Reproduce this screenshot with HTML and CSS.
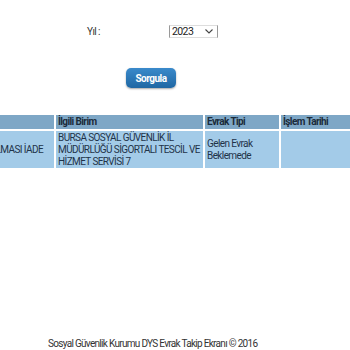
FILE: index.html
```html
<!DOCTYPE html>
<html>
<head>
<meta charset="utf-8">
<link rel="stylesheet" href="styles.css">
</head>
<body>
<div class="page">
  <div class="form-row">
    <span class="label">Yıl :</span>
    <div class="select"><span>2023</span><svg class="chev" width="8" height="5" viewBox="0 0 8 5"><path d="M0.5 0.5 L4 4 L7.5 0.5" fill="none" stroke="#444" stroke-width="1.1"/></svg></div>
  </div>
  <div class="btn-row"><button class="btn">Sorgula</button></div>
  <div class="table-wrap">
    <table class="grid">
      <tr class="head">
        <th class="c1"></th>
        <th class="c2">İlgili Birim</th>
        <th class="c3">Evrak Tipi</th>
        <th class="c4">İşlem Tarihi</th>
      </tr>
      <tr class="data">
        <td class="c1 right">YAPILMASI İADE</td>
        <td class="c2">BURSA SOSYAL GÜVENLİK İL MÜDÜRLÜĞÜ SİGORTALI TESCİL VE HİZMET SERVİSİ 7</td>
        <td class="c3">Gelen Evrak Beklemede</td>
        <td class="c4"></td>
      </tr>
    </table>
  </div>
  <div class="spacer"></div>
  <div class="footer">Sosyal Güvenlik Kurumu DYS Evrak Takip Ekranı © 2016</div>
</div>
</body>
</html>
```
FILE: styles.css
```css
html, body { margin: 0; padding: 0; background: #fff; }
body { font-family: Roboto, "Noto Sans", sans-serif; color: #333; overflow: hidden; letter-spacing: -0.6px; }
.page { width: 350px; height: 350px; display: flex; flex-direction: column; }
.form-row { display: flex; align-items: center; height: 12px; margin-top: 25px; }
.label { font-size: 10px; color: #333; margin-left: 87px; width: 82px; }
.select { width: 41px; height: 11px; border: 1px solid #999; border-top-color: #ddd; border-bottom-color: #ddd; display: flex; align-items: center; justify-content: space-between; padding: 0 4px 0 2px; box-sizing: content-box; font-size: 10.5px; color: #222; }
.chev { margin-top: 1px; }
.btn-row { display: flex; margin-top: 31px; padding-left: 126px; }
.btn { width: 50px; height: 20px; border: none; border-radius: 5px; background: linear-gradient(#3a8acb, #1f67a3); box-shadow: 0 1px 2px rgba(0,0,0,0.35); color: #fff; font-family: Roboto, sans-serif; font-weight: bold; font-size: 10px; letter-spacing: -0.5px; padding: 0; }
.table-wrap { display: flex; justify-content: center; margin-top: 25px; width: 350px; }
.grid { border-collapse: separate; border-spacing: 2px; background: #fff; flex: none; font-size: 10px; table-layout: fixed; width: 416px; }
.grid th, .grid td { padding: 0 2px; text-align: left; vertical-align: middle; }
.head th { background: #7ea7c6; color: #1b2b3a; font-weight: bold; height: 14px; line-height: 14px; }
.data td { background: #a3cbe8; color: #1f3348; height: 37px; line-height: 12px; }
.c1 { width: 81px; }
.c2 { width: 143px; }
.c3 { width: 70px; }
.c4 { width: 96px; }
.right { white-space: nowrap; }
.data td.right { text-align: right; padding-right: 11px; }
.spacer { flex: 1; }
.footer { font-size: 10px; letter-spacing: -0.7px; color: #333; margin: 0 0 0 48px; height: 13px; line-height: 13px; }
```
